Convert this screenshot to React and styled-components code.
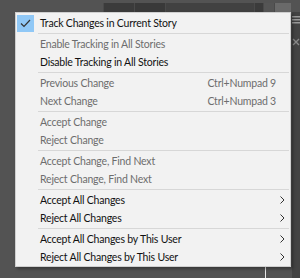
import React from "react";
import styled, { createGlobalStyle } from "styled-components";

const GlobalStyle = createGlobalStyle`
  html, body {
    margin: 0;
    padding: 0;
    background: #535353;
  }
  body {
    font-family: "Segoe UI", Lato, "Noto Sans", sans-serif;
  }
`;

const menuGroups = [
  [{ label: "Track Changes in Current Story", checked: true }],
  [
    { label: "Enable Tracking in All Stories", disabled: true },
    { label: "Disable Tracking in All Stories" },
  ],
  [
    { label: "Previous Change", shortcut: "Ctrl+Numpad 9", disabled: true },
    { label: "Next Change", shortcut: "Ctrl+Numpad 3", disabled: true },
  ],
  [
    { label: "Accept Change", disabled: true },
    { label: "Reject Change", disabled: true },
  ],
  [
    { label: "Accept Change, Find Next", disabled: true },
    { label: "Reject Change, Find Next", disabled: true },
  ],
  [
    { label: "Accept All Changes", submenu: true },
    { label: "Reject All Changes", submenu: true },
  ],
  [
    { label: "Accept All Changes by This User", submenu: true },
    { label: "Reject All Changes by This User", submenu: true },
  ],
];

const Page = styled.div`
  position: relative;
  width: 300px;
  height: 278px;
  overflow: hidden;
  background: #535353;
  display: grid;
  grid-template-columns: 1fr 8px;
  grid-template-rows: 12px 1fr;
`;

const TopBar = styled.div`
  grid-column: 1 / 3;
  display: flex;
  align-items: flex-end;
  padding-left: 103px;
`;

const TopTab = styled.div`
  height: 9px;
  width: ${p => p.w}px;
  background: ${p => p.bg};
  border-left: 1px solid #4a4a4a;
`;

const Workspace = styled.div`
  display: flex;
  justify-content: flex-end;
  align-items: flex-end;
  padding-right: 26px;
`;

const Divider = styled.div`
  width: 1px;
  height: 12px;
  background: #e8e8e8;
`;

const SidePanel = styled.div`
  background: #434343;
  display: flex;
  flex-direction: column;
  align-items: center;
  padding-top: 4px;
  gap: 14px;
`;

const Menu = styled.div`
  position: absolute;
  left: 15px;
  top: 12px;
  width: 274px;
  padding: 1px 0 0;
  background: #f2f2f2;
  border: 1px solid #cfcfcf;
  box-shadow: 2px 2px 3px rgba(0, 0, 0, 0.35);
  font-size: 10.5px;
  letter-spacing: -0.2px;
`;

const Row = styled.div`
  display: grid;
  grid-template-columns: 24px 1fr auto 14px;
  align-items: center;
  height: 18px;
  color: ${p => (p.disabled ? "#6d6d6d" : "#111")};
  white-space: nowrap;
`;

const CheckCell = styled.div`
  width: 17px;
  height: 17px;
  margin-left: 1px;
  background: ${p => (p.on ? "#90c8f6" : "transparent")};
  display: flex;
  align-items: center;
  justify-content: center;
`;

const Label = styled.span`
  line-height: 18px;
`;

const Shortcut = styled.span`
  color: #6d6d6d;
  line-height: 18px;
`;

const ArrowCell = styled.div`
  display: flex;
  align-items: center;
  padding-left: 4px;
`;

const Separator = styled.div`
  height: 1px;
  margin: 1px 1px 1px 22px;
  background: #d7d7d7;
`;

const Check = () => (
  <svg width="11" height="9" viewBox="0 0 11 9">
    <polyline points="1,4.5 4,7.5 10,1" fill="none" stroke="#333" strokeWidth="1.2" />
  </svg>
);

const Chevron = () => (
  <svg width="5" height="8" viewBox="0 0 5 8">
    <polyline points="0.5,0.5 4,4 0.5,7.5" fill="none" stroke="#333" strokeWidth="1" />
  </svg>
);

const App = () => (
  <>
    <GlobalStyle />
    <Page>
      <TopBar>
        <TopTab w={30} bg="#3b3b3b" />
        <TopTab w={30} bg="#393939" />
        <TopTab w={88} bg="#414141" />
        <TopTab w={8} bg="#3b3b3b" />
        <TopTab w={10} bg="#555" />
        <TopTab w={16} bg="#6a6a6a" />
      </TopBar>
      <Workspace>
        <Divider />
      </Workspace>
      <SidePanel>
        <svg width="8" height="8" viewBox="0 0 8 8">
          <rect x="0" y="0" width="8" height="1.5" fill="#999" />
          <rect x="0" y="3" width="8" height="1.5" fill="#999" />
          <rect x="0" y="6" width="8" height="1.5" fill="#999" />
        </svg>
        <svg width="8" height="8" viewBox="0 0 8 8">
          <path d="M1 1 L7 7 M7 1 L1 7" stroke="#8a8a8a" strokeWidth="1.4" />
        </svg>
      </SidePanel>
      <Menu>
        {menuGroups.map((group, gi) => (
          <React.Fragment key={gi}>
            {gi > 0 && <Separator />}
            {group.map(item => (
              <Row key={item.label} disabled={item.disabled}>
                <CheckCell on={item.checked}>{item.checked && <Check />}</CheckCell>
                <Label>{item.label}</Label>
                <Shortcut>{item.shortcut}</Shortcut>
                <ArrowCell>{item.submenu && <Chevron />}</ArrowCell>
              </Row>
            ))}
          </React.Fragment>
        ))}
      </Menu>
    </Page>
  </>
);

export default App;
